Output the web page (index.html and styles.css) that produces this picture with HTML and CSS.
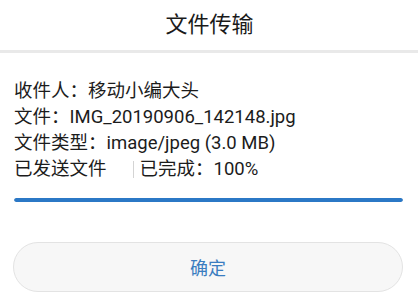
FILE: index.html
```html
<!DOCTYPE html>
<html lang="zh">
<head>
<meta charset="utf-8">
<link rel="stylesheet" href="styles.css">
</head>
<body>
<div class="dialog">
  <div class="header">文件传输</div>
  <div class="divider"></div>
  <div class="content">
    <div class="line">收件人：移动小编大头</div>
    <div class="line">文件：IMG_20190906_142148.jpg</div>
    <div class="line">文件类型：image/jpeg (3.0 MB)</div>
    <div class="line status">
      <span class="sent">已发送文件</span>
      <span class="sep"></span>
      <span class="done">已完成：100%</span>
    </div>
    <div class="progress"><div class="fill" style="width:100%"></div></div>
    <button class="ok">确定</button>
  </div>
</div>
</body>
</html>
```
FILE: styles.css
```css
html, body {
  margin: 0;
  padding: 0;
  background: #ffffff;
}
body {
  font-family: "Roboto", "Noto Sans CJK SC", sans-serif;
  color: #1c1c1c;
  width: 418px;
  height: 304px;
  overflow: hidden;
}
.dialog {
  display: flex;
  flex-direction: column;
}
.header {
  height: 44px;
  padding-bottom: 6px;
  display: flex;
  align-items: center;
  justify-content: center;
  font-size: 22px;
  color: #1a1a1a;
  padding-left: 1px;
}
.divider {
  height: 3px;
  background: #e9e9e9;
}
.content {
  padding: 25px 15px 0 14px;
  display: flex;
  flex-direction: column;
}
.line {
  font-size: 18.5px;
  line-height: 26px;
  color: #1c1c1c;
  white-space: nowrap;
}
.status {
  display: flex;
  align-items: center;
}
.sep {
  width: 1px;
  height: 17px;
  background: #d4d4d4;
  margin: 0 6px 0 26px;
}
.progress {
  margin-top: 16px;
  height: 4px;
  border-radius: 2px;
  background: #e6e6e6;
  overflow: hidden;
}
.fill {
  height: 100%;
  background: #2b78c6;
  border-radius: 2px;
}
.ok {
  margin-top: 40px;
  height: 50px;
  border-radius: 25px;
  border: 1px solid #e3e3e3;
  background: #f7f7f7;
  color: #3a7dc0;
  font-family: "Roboto", "Noto Sans CJK SC", sans-serif;
  font-size: 18px;
  padding: 0;
  margin-left: -1px;
}
```
